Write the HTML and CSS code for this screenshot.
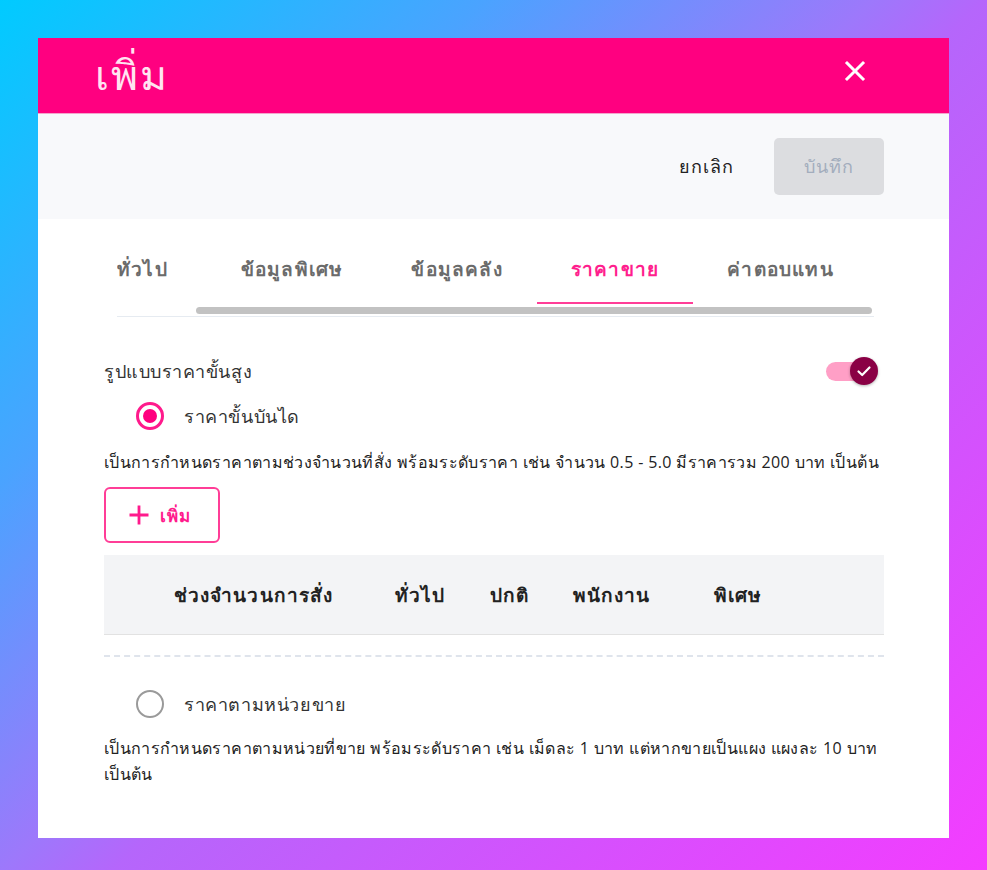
FILE: index.html
```html
<!DOCTYPE html>
<html lang="th">
<head>
<meta charset="utf-8">
<title>เพิ่ม</title>
<link rel="stylesheet" href="styles.css">
</head>
<body>
<div class="modal">
  <header class="modal-head">
    <h1 class="title">เพิ่ม</h1>
    <button class="close" aria-label="close">
      <svg width="22" height="22" viewBox="0 0 22 22"><path d="M3 3L19 19M19 3L3 19" stroke="#fff" stroke-width="3" stroke-linecap="square"/></svg>
    </button>
  </header>
  <div class="toolbar">
    <button class="btn-cancel">ยกเลิก</button>
    <button class="btn-save">บันทึก</button>
  </div>
  <div class="content">
    <div class="tabs-wrap">
      <div class="tabs">
        <div class="tab tab-first">ทั่วไป</div>
        <div class="tab">ข้อมูลพิเศษ</div>
        <div class="tab">ข้อมูลคลัง</div>
        <div class="tab active">ราคาขาย</div>
        <div class="tab">ค่าตอบแทน</div>
      </div>
      <div class="scroll-track"><div class="scroll-thumb"></div></div>
      <div class="tabs-line"></div>
    </div>

    <div class="row-head">
      <span class="label">รูปแบบราคาขั้นสูง</span>
      <span class="toggle">
        <span class="toggle-track"></span>
        <span class="toggle-knob">
          <svg width="16" height="16" viewBox="0 0 16 16"><path d="M2.5 8.5L6.2 12L13.5 4.5" fill="none" stroke="#fff" stroke-width="2.2" stroke-linecap="round" stroke-linejoin="round"/></svg>
        </span>
      </span>
    </div>

    <div class="radio-row">
      <span class="radio checked"><span class="dot"></span></span>
      <span class="radio-label">ราคาขั้นบันได</span>
    </div>
    <p class="desc desc1">เป็นการกำหนดราคาตามช่วงจำนวนที่สั่ง พร้อมระดับราคา เช่น จำนวน 0.5 - 5.0 มีราคารวม 200 บาท เป็นต้น</p>

    <button class="btn-add">
      <svg width="22" height="22" viewBox="0 0 22 22"><path d="M11 1.5V20.5M1.5 11H20.5" stroke="#ff1a8c" stroke-width="2.8"/></svg>
      <span>เพิ่ม</span>
    </button>

    <div class="table-head">
      <span class="th">ช่วงจำนวนการสั่ง</span>
      <span class="th">ทั่วไป</span>
      <span class="th">ปกติ</span>
      <span class="th">พนักงาน</span>
      <span class="th">พิเศษ</span>
    </div>

    <div class="dashed"></div>

    <div class="radio-row radio-row2">
      <span class="radio"></span>
      <span class="radio-label">ราคาตามหน่วยขาย</span>
    </div>
    <p class="desc desc2">เป็นการกำหนดราคาตามหน่วยที่ขาย พร้อมระดับราคา เช่น เม็ดละ 1 บาท แต่หากขายเป็นแผง แผงละ 10 บาท เป็นต้น</p>
  </div>
</div>
</body>
</html>
```

FILE: styles.css
```css
html, body {
  margin: 0;
  padding: 0;
}
body {
  width: 987px;
  height: 870px;
  box-sizing: border-box;
  padding: 38px;
  background: linear-gradient(135deg, #00cbff 0%, #4aa3ff 26%, #9d78fb 47%, #b566fb 53%, #f43cff 100%);
  font-family: "Open Sans", "Noto Sans", sans-serif;
  overflow: hidden;
}
.modal {
  width: 911px;
  height: 800px;
  background: #fff;
  display: flex;
  flex-direction: column;
}
.modal-head {
  height: 76px;
  background: #ff0080;
  display: flex;
  align-items: center;
  justify-content: space-between;
  padding: 0 83px 0 57px;
  box-sizing: border-box;
  border-bottom: 1px solid #f3a5cc;
}
.title {
  margin: 0;
  font-family: serif;
  font-weight: normal;
  font-size: 41px;
  letter-spacing: 2px;
  color: #ffe4f1;
  line-height: 1;
  padding-top: 2px;
}
.close {
  background: none;
  border: 0;
  padding: 0;
  display: flex;
  margin-top: -10px;
}
.toolbar {
  height: 105px;
  background: #f8f9fb;
  display: flex;
  align-items: center;
  justify-content: flex-end;
  padding-right: 65px;
  gap: 40px;
}
.btn-cancel {
  background: none;
  border: 0;
  padding: 0;
  font-family: inherit;
  font-size: 18px;
  letter-spacing: 1px;
  color: #222;
}
.btn-save {
  width: 110px;
  height: 57px;
  border: 0;
  border-radius: 5px;
  background: #dcdde0;
  color: #a3adbd;
  font-family: inherit;
  font-size: 18px;
  letter-spacing: 0.8px;
}
.content {
  padding: 0 65px 0 66px;
  display: flex;
  flex-direction: column;
}
.tabs-wrap {
  margin: 0 10px 0 13px;
  overflow: hidden;
}
.tabs {
  display: flex;
  margin-left: -34px;
  white-space: nowrap;
}
.tab {
  padding: 38px 34px 21px;
  line-height: 24px;
  font-size: 19px;
  letter-spacing: 1.2px;
  font-weight: bold;
  color: #6b6b6b;
  border-bottom: 2px solid transparent;
  flex: none;
}
.tab-first {
  padding-right: 39px;
}
.tab.active {
  color: #ff1f8e;
  border-bottom-color: #ff3d97;
}
.scroll-track {
  margin-top: 3px;
  height: 7px;
  padding-left: 79px;
  padding-right: 2px;
}
.scroll-thumb {
  height: 7px;
  background: #c2c2c2;
  border-radius: 4px;
}
.tabs-line {
  margin-top: 2px;
  height: 1px;
  background: #e6ebf1;
}
.row-head {
  margin-top: 39px;
  height: 30px;
  display: flex;
  align-items: center;
  justify-content: space-between;
}
.label {
  font-size: 18px;
  letter-spacing: 0.55px;
  color: #333;
}
.toggle {
  position: relative;
  width: 52px;
  height: 30px;
  margin-right: 6px;
}
.toggle-track {
  position: absolute;
  left: 0;
  top: 6px;
  width: 40px;
  height: 19px;
  border-radius: 10px;
  background: #ff9fc6;
}
.toggle-knob {
  position: absolute;
  right: 0;
  top: 1px;
  width: 28px;
  height: 28px;
  border-radius: 50%;
  background: #8a0045;
  box-shadow: 0 1px 3px rgba(0,0,0,0.3);
  display: flex;
  align-items: center;
  justify-content: center;
}
.radio-row {
  margin-top: 16px;
  height: 28px;
  display: flex;
  align-items: center;
  padding-left: 32px;
  gap: 20px;
}
.radio {
  width: 28px;
  height: 28px;
  box-sizing: border-box;
  border-radius: 50%;
  border: 2px solid #9a9a9a;
  display: flex;
  align-items: center;
  justify-content: center;
}
.radio.checked {
  border: 3px solid #ff1a8c;
}
.dot {
  width: 14px;
  height: 14px;
  border-radius: 50%;
  background: #ff007f;
}
.radio-label {
  font-size: 18px;
  letter-spacing: 0.6px;
  color: #333;
}
.desc {
  margin: 20px 0 0;
  font-size: 16px;
  letter-spacing: 0.35px;
  line-height: 24px;
  color: #222;
}
.btn-add {
  margin-top: 13px;
  align-self: flex-start;
  width: 116px;
  height: 56px;
  box-sizing: border-box;
  border: 2px solid #ff3d97;
  border-radius: 6px;
  background: #fff;
  display: flex;
  align-items: center;
  justify-content: center;
  gap: 10px;
  padding: 0 6px 0 0;
  color: #ff1a8c;
  font-family: inherit;
  font-weight: bold;
  font-size: 17px;
  letter-spacing: 1px;
}
.table-head {
  margin-top: 12px;
  height: 79px;
  box-sizing: content-box;
  background: #f3f4f6;
  border-bottom: 1px solid #e2e2e2;
  display: grid;
  grid-template-columns: 221px 95px 83px 141px auto;
  align-items: center;
  padding-left: 70px;
  font-size: 19px;
  letter-spacing: 1.1px;
  font-weight: bold;
  color: #222;
}
.dashed {
  margin-top: 20px;
  border-top: 2px dashed #dfe4ec;
}
.radio-row2 {
  margin-top: 33px;
}
.desc2 {
  margin-top: 17px;
  line-height: 26px;
  padding-right: 4px;
}
```
